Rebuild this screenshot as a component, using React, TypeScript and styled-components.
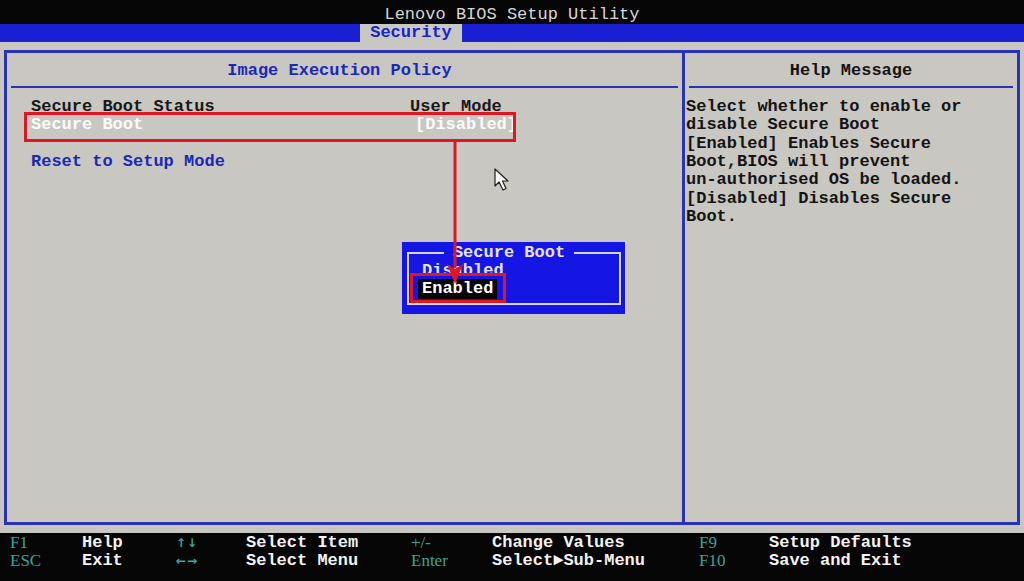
import React from "react";
import styled, { createGlobalStyle } from "styled-components";

const GlobalStyle = createGlobalStyle`
  html, body {
    margin: 0;
    padding: 0;
    background: #050505;
  }
  body {
    font-family: "Liberation Mono", "DejaVu Sans Mono", monospace;
  }
`;

const BIOS_BLUE = "#1a1fd2";
const LINE_BLUE = "#2a33b4";
const GRAY = "#c9c7c2";

const Screen = styled.div`
  position: relative;
  width: 1024px;
  height: 581px;
  display: flex;
  flex-direction: column;
  overflow: hidden;
  font-size: 17px;
  font-weight: bold;
`;

const TitleBar = styled.div`
  height: 24px;
  background: #060606;
  color: #d6d6d6;
  font-weight: normal;
  display: flex;
  align-items: center;
  justify-content: center;
  padding-top: 4px;
  box-sizing: border-box;
`;

const MenuBar = styled.div`
  height: 18px;
  background: ${BIOS_BLUE};
  display: flex;
  padding-left: 360px;
`;

const MenuTab = styled.div`
  width: 102px;
  background: ${GRAY};
  color: ${BIOS_BLUE};
  display: flex;
  align-items: center;
  justify-content: center;
  line-height: 18px;
`;

const Main = styled.div`
  height: 491px;
  background: ${GRAY};
  padding: 8px 4px 8px 4px;
  box-sizing: border-box;
`;

const Frame = styled.div`
  height: 100%;
  border: 3px solid ${LINE_BLUE};
  box-sizing: border-box;
  display: grid;
  grid-template-columns: 675px 3px 1fr;
`;

const Divider = styled.div`
  background: ${LINE_BLUE};
`;

const Column = styled.div`
  display: flex;
  flex-direction: column;
`;

const ColumnHeader = styled.div<{ $color: string; $offset?: number }>`
  height: 33px;
  display: flex;
  align-items: center;
  justify-content: center;
  color: ${(p) => p.$color};
  padding: 2px ${(p) => p.$offset || 0}px 0 0;
  box-sizing: border-box;
`;

const HeaderRule = styled.div`
  height: 2px;
  margin: 0 4px;
  background: ${LINE_BLUE};
`;

const ItemList = styled.div`
  padding: 10px 0 0 24px;
  line-height: 18.4px;
`;

const ItemRow = styled.div`
  display: grid;
  grid-template-columns: 379px auto;
  height: 18.4px;
`;

const ItemLabel = styled.span<{ $color: string }>`
  color: ${(p) => p.$color};
`;

const ItemValue = styled.span<{ $color: string; $shift?: number }>`
  color: ${(p) => p.$color};
  margin-left: ${(p) => p.$shift || 0}px;
`;

const HelpText = styled.div`
  padding: 10px 6px 0 1px;
  line-height: 18.33px;
  color: #141414;
  white-space: pre;
`;

const Footer = styled.div`
  flex: 1;
  background: #060606;
  padding: 1px 0 0 10px;
  display: grid;
  grid-template-columns: 72px 94px 70px 165px 81px 207px 70px 1fr;
  grid-auto-rows: 18.4px;
  line-height: 18.4px;
`;

const FooterKey = styled.span`
  color: #3aa596;
  font-family: "Liberation Serif", "DejaVu Serif", serif;
  font-weight: normal;
  font-size: 17px;
`;

const FooterArrow = styled.span`
  color: #3aa596;
  font-family: "DejaVu Sans", sans-serif;
  font-size: 12px;
  letter-spacing: 1px;
`;

const FooterText = styled.span`
  color: #f2f2f2;
`;

/* overlays: annotation marks and the option dialog */

const RedBox = styled.div<{ $x: number; $y: number; $w: number; $h: number }>`
  position: absolute;
  left: ${(p) => p.$x}px;
  top: ${(p) => p.$y}px;
  width: ${(p) => p.$w}px;
  height: ${(p) => p.$h}px;
  border: 3px solid #e01620;
  box-sizing: border-box;
  z-index: 3;
`;

const Overlay = styled.svg`
  position: absolute;
  left: 0;
  top: 0;
  z-index: 4;
  pointer-events: none;
`;

const Popup = styled.div`
  position: absolute;
  left: 402px;
  top: 242px;
  width: 223px;
  height: 72px;
  background: #1616e4;
  padding: 10px 4px 9px 5px;
  box-sizing: border-box;
  z-index: 2;
`;

const PopupFrame = styled.div`
  position: relative;
  height: 100%;
  border: 2px solid #d4d4e4;
  box-sizing: border-box;
  padding: 8px 0 0 9px;
`;

const PopupTitle = styled.div`
  position: absolute;
  top: -10px;
  left: 0;
  right: 0;
  display: flex;
  justify-content: center;
  line-height: 18px;
`;

const PopupTitleText = styled.span`
  background: #1616e4;
  color: #e4e4ee;
  padding: 0 9px;
  margin-left: -10px;
`;

const Option = styled.div<{ $active?: boolean }>`
  display: inline-block;
  height: ${(p) => (p.$active ? "20px" : "17px")};
  line-height: ${(p) => (p.$active ? "20px" : "17px")};
  padding: 0 4px;
  color: ${(p) => (p.$active ? "#ffffff" : "#e4e4ee")};
  background: ${(p) => (p.$active ? "#050505" : "transparent")};
`;

const OptionList = styled.div`
  display: flex;
  flex-direction: column;
  align-items: flex-start;
`;

const helpLines = [
  "Select whether to enable or",
  "disable Secure Boot",
  "[Enabled] Enables Secure",
  "Boot,BIOS will prevent",
  "un-authorised OS be loaded.",
  "[Disabled] Disables Secure",
  "Boot.",
];

const footerItems: [React.ReactNode, string][] = [
  [<FooterKey>F1</FooterKey>, "Help"],
  [<FooterArrow>↑↓</FooterArrow>, "Select Item"],
  [<FooterKey>+/-</FooterKey>, "Change Values"],
  [<FooterKey>F9</FooterKey>, "Setup Defaults"],
  [<FooterKey>ESC</FooterKey>, "Exit"],
  [<FooterArrow>←→</FooterArrow>, "Select Menu"],
  [<FooterKey>Enter</FooterKey>, "Select►Sub-Menu"],
  [<FooterKey>F10</FooterKey>, "Save and Exit"],
];

export default function App(): JSX.Element {
  return (
    <>
      <GlobalStyle />
      <Screen>
        <TitleBar>Lenovo BIOS Setup Utility</TitleBar>
        <MenuBar>
          <MenuTab>Security</MenuTab>
        </MenuBar>
        <Main>
          <Frame>
            <Column>
              <ColumnHeader $color="#1a28b8" $offset={10}>
                Image Execution Policy
              </ColumnHeader>
              <HeaderRule />
              <ItemList>
                <ItemRow>
                  <ItemLabel $color="#181818">Secure Boot Status</ItemLabel>
                  <ItemValue $color="#181818">User Mode</ItemValue>
                </ItemRow>
                <ItemRow>
                  <ItemLabel $color="#fafafa">Secure Boot</ItemLabel>
                  <ItemValue $color="#fafafa" $shift={5}>
                    [Disabled]
                  </ItemValue>
                </ItemRow>
                <ItemRow />
                <ItemRow>
                  <ItemLabel $color="#1a28b8">Reset to Setup Mode</ItemLabel>
                </ItemRow>
              </ItemList>
            </Column>
            <Divider />
            <Column>
              <ColumnHeader $color="#141414">Help Message</ColumnHeader>
              <HeaderRule />
              <HelpText>{helpLines.join("\n")}</HelpText>
            </Column>
          </Frame>
        </Main>
        <Footer>
          {[0, 4].map((start) =>
            footerItems.slice(start, start + 4).map(([key, label], i) => (
              <React.Fragment key={start + i}>
                {key}
                <FooterText>{label}</FooterText>
              </React.Fragment>
            ))
          )}
        </Footer>

        <Popup>
          <PopupFrame>
            <PopupTitle>
              <PopupTitleText>Secure Boot</PopupTitleText>
            </PopupTitle>
            <OptionList>
              <Option>Disabled</Option>
              <Option $active>Enabled</Option>
            </OptionList>
          </PopupFrame>
        </Popup>

        <RedBox $x={24} $y={112} $w={492} $h={30} />
        <RedBox $x={410} $y={273} $w={96} $h={30} />

        <Overlay width="1024" height="581" viewBox="0 0 1024 581">
          <line x1="455" y1="141" x2="455" y2="268" stroke="#e01620" strokeWidth="3" />
          <path d="M447 264 L455 284 L463 264 L455 269 Z" fill="#e01620" />
          <path
            d="M495 169 L495 186 L499 182 L503 190 L506 188.5 L502.5 181 L508 181 Z"
            fill="#fafafa"
            stroke="#202020"
            strokeWidth="1.2"
            strokeLinejoin="round"
          />
        </Overlay>
      </Screen>
    </>
  );
}
